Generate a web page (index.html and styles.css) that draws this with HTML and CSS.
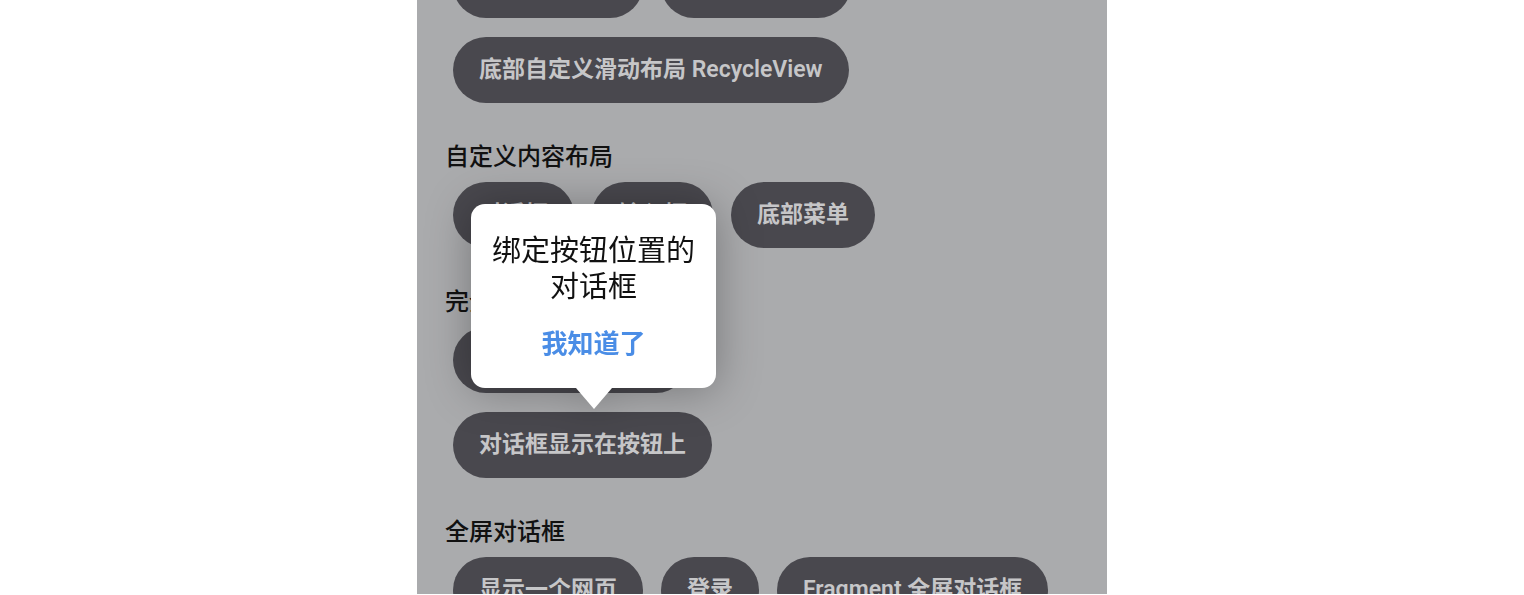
FILE: index.html
```html
<!DOCTYPE html>
<html lang="zh-CN">
<head>
    <meta charset="UTF-8">
    <title>对话框示例</title>
    <link rel="stylesheet" href="styles.css">
</head>
<body>
    <div class="screen">
        <div class="list">
            <div class="chips">
                <span class="chip">底部列表菜单</span>
                <span class="chip">底部分享菜单</span>
            </div>
            <div class="chips chips-next">
                <span class="chip">底部自定义滑动布局 RecycleView</span>
            </div>

            <h3 class="section-title">自定义内容布局</h3>
            <div class="chips">
                <span class="chip">对话框</span>
                <span class="chip">输入框</span>
                <span class="chip">底部菜单</span>
            </div>

            <h3 class="section-title">完全自定义对话框</h3>
            <div class="chips">
                <span class="chip">绑定位置的对话框</span>
            </div>
            <div class="chips chips-next">
                <span class="chip">对话框显示在按钮上</span>
            </div>

            <h3 class="section-title">全屏对话框</h3>
            <div class="chips">
                <span class="chip">显示一个网页</span>
                <span class="chip">登录</span>
                <span class="chip">Fragment 全屏对话框</span>
            </div>
        </div>

        <div class="popup">
            <div class="popup-box">
                <p class="popup-text">绑定按钮位置的<br>对话框</p>
                <div class="popup-btn">我知道了</div>
            </div>
            <div class="popup-arrow"></div>
        </div>
    </div>
</body>
</html>
```

FILE: styles.css
```css
body {
    margin: 0;
    background-color: #ffffff;
    font-family: Roboto, "Noto Sans CJK SC", sans-serif;
}
.screen {
    position: relative;
    width: 690px;
    height: 594px;
    margin: 0 auto;
    background-color: #aaabad;
    overflow: hidden;
}
.list {
    margin-top: -48px;
    padding-left: 28px;
}
.chips {
    display: flex;
    flex-wrap: wrap;
    gap: 18px;
    padding-left: 8px;
}
.chips-next {
    margin-top: 19px;
}
.chip {
    height: 66px;
    line-height: 66px;
    padding: 0 26px;
    border-radius: 33px;
    background-color: #49484e;
    color: #c6c6c8;
    font-size: 23px;
    font-weight: 600;
    white-space: nowrap;
}
.section-title {
    margin: 38px 0 9px 0;
    height: 32px;
    line-height: 32px;
    font-size: 24px;
    font-weight: 500;
    color: #111111;
}
.popup {
    position: absolute;
    left: 54px;
    top: 204px;
    width: 245px;
    filter: drop-shadow(0 2px 22px rgba(0, 0, 0, 0.3));
}
.popup-box {
    background-color: #ffffff;
    border-radius: 14px;
    height: 184px;
    box-sizing: border-box;
    padding-top: 26px;
    text-align: center;
}
.popup-text {
    margin: 0;
    font-family: "Noto Sans CJK SC", sans-serif;
    font-size: 29px;
    font-weight: 400;
    line-height: 36px;
    color: #111111;
}
.popup-btn {
    margin-top: 24px;
    font-size: 26px;
    line-height: 36px;
    font-weight: 700;
    color: #4a8de6;
}
.popup-arrow {
    width: 0;
    height: 0;
    margin: 0 auto;
    border-left: 18px solid transparent;
    border-right: 18px solid transparent;
    border-top: 21px solid #ffffff;
}
```
